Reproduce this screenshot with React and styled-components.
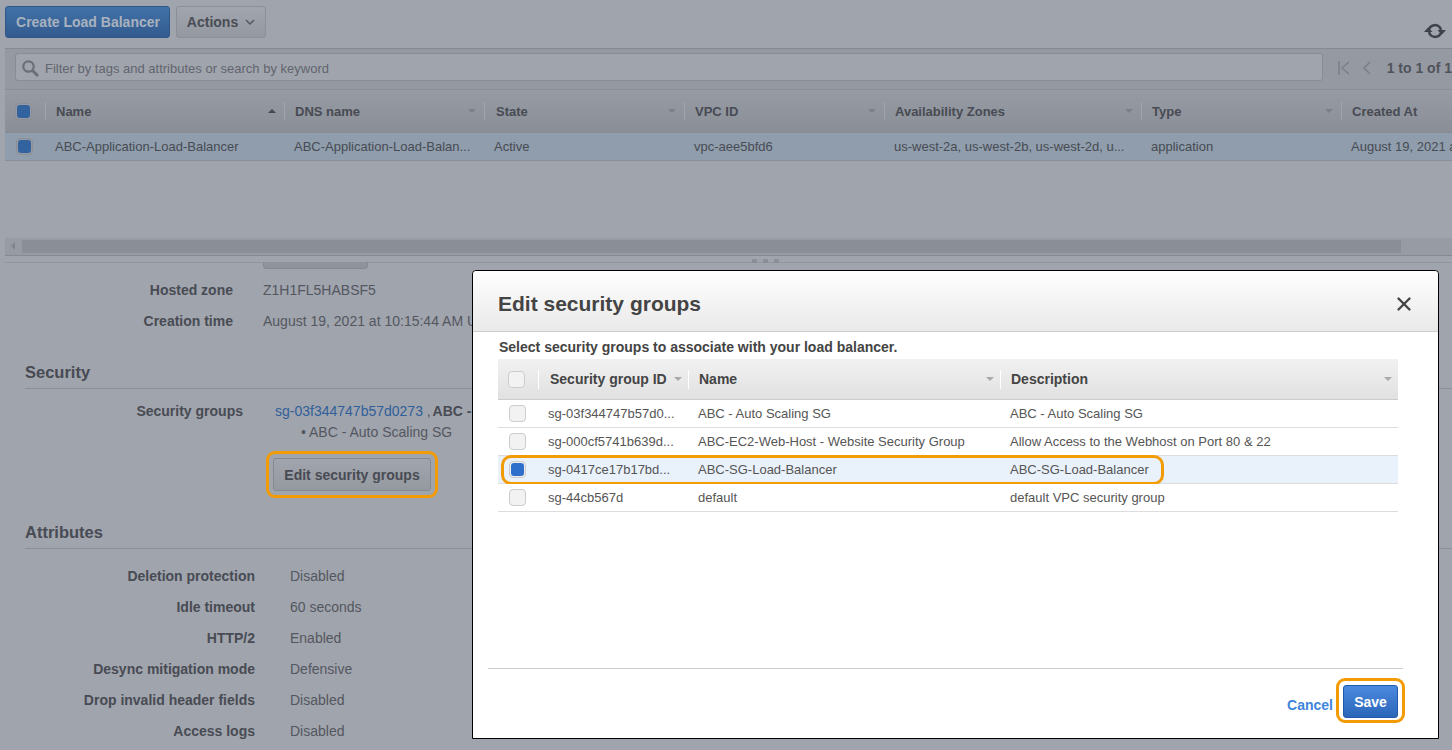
import styled, { createGlobalStyle } from "styled-components";
import { X } from "lucide-react";

const Global = createGlobalStyle`
  html, body { margin: 0; padding: 0; }
  body { font-family: "Liberation Sans", Arial, sans-serif; font-size: 13px; color: #50535b; background: #a0a4ad; }
`;

const Page = styled.div`
  position: relative;
  width: 1452px;
  height: 750px;
  overflow: hidden;
  background: #a0a4ad;
`;

const Main = styled.div`
  padding-left: 5px;
`;

const Toolbar = styled.div`
  height: 49px;
  display: flex;
  gap: 6px;
  padding-top: 6px;
  box-sizing: border-box;
  position: relative;
  border-bottom: 1px solid #858992;
`;

const PrimaryDim = styled.div`
  width: 165px;
  height: 32px;
  box-sizing: border-box;
  border: 1px solid #2f5888;
  border-radius: 3px;
  background: linear-gradient(#4172a8, #335b8f);
  color: #a9b2bf;
  font-weight: bold;
  font-size: 14px;
  padding-left: 1px;
  display: flex;
  align-items: center;
  justify-content: center;
`;

const ActionsButton = styled.div`
  width: 90px;
  height: 32px;
  box-sizing: border-box;
  border: 1px solid #8b8f98;
  border-radius: 3px;
  background: linear-gradient(#a1a5ae, #94989f);
  color: #4a4d55;
  font-weight: bold;
  font-size: 14px;
  display: flex;
  align-items: center;
  justify-content: center;
  gap: 7px;
`;

const RefreshIcon = styled.svg`
  position: absolute;
  right: 6px;
  top: 23px;
`;

const FilterBar = styled.div`
  height: 41px;
  box-sizing: border-box;
  background: #9599a2;
  padding: 4px 0 0 10px;
  display: flex;
  border-bottom: 1px solid #8a8e97;
`;

const FilterInput = styled.div`
  width: 1308px;
  height: 28px;
  box-sizing: border-box;
  background: #a0a4ad;
  border: 1px solid #888c95;
  border-radius: 3px;
  display: flex;
  align-items: center;
  padding: 2px 0 0 6px;
  gap: 5px;
  color: #62656d;
  font-size: 13px;
`;

const Pager = styled.div`
  display: flex;
  align-items: center;
  height: 30px;
  margin-left: 15px;
  gap: 16px;
  color: #50535b;
  font-weight: bold;
  white-space: nowrap;
  font-size: 14px;
`;

const PagerIcons = styled.div`
  display: flex;
  gap: 13px;
  align-items: center;
`;

const columns = "40px 239px 200px 200px 200px 257px 200px 1fr";

const TableHead = styled.div`
  display: grid;
  grid-template-columns: ${columns};
  height: 43px;
  box-sizing: border-box;
  background: linear-gradient(#979ba4, #8a8e97);
  border-bottom: 1px solid #868a93;
  align-items: center;
`;

const HeadCell = styled.div`
  height: 18px;
  display: flex;
  align-items: center;
  justify-content: space-between;
  padding: 0 8px 0 ${(p) => p.$pad || 10}px;
  border-left: 1px solid #a0a4ad;
  font-weight: bold;
  color: #484b53;
  font-size: 13px;
  white-space: nowrap;
  overflow: hidden;
`;

const Caret = styled.span`
  width: 0;
  height: 0;
  border-left: 4px solid transparent;
  border-right: 4px solid transparent;
  border-${(p) => (p.$up ? "bottom" : "top")}: 4px solid ${(p) => p.$color || "#7b7f88"};
`;

const TableRow = styled.div`
  display: grid;
  grid-template-columns: ${columns};
  height: 28px;
  box-sizing: border-box;
  align-items: center;
  background: #8f9dac;
  border-bottom: 1px solid #8a8e97;
  color: #484b53;
  font-size: 13px;
`;

const Cell = styled.div`
  padding-left: 10px;
  white-space: nowrap;
  overflow: hidden;
`;

const CheckCell = styled.div`
  display: flex;
  justify-content: center;
  padding-right: ${(p) => p.$right || 0}px;
`;

const Check = styled.span`
  width: 17px;
  height: 17px;
  box-sizing: border-box;
  display: flex;
  align-items: center;
  justify-content: center;
  border: 1px solid ${(p) => p.$border};
  border-radius: 4px;
  background: ${(p) => p.$bg};
  &::after {
    content: "";
    display: ${(p) => (p.$fill ? "block" : "none")};
    width: 13px;
    height: 13px;
    border-radius: 3px;
    background: ${(p) => p.$fill};
  }
`;

const TableGap = styled.div`
  height: 77px;
`;

const ScrollBar = styled.div`
  height: 18px;
  box-sizing: border-box;
  background: #979ba4;
  border-bottom: 1px solid #858992;
  display: flex;
  align-items: center;
  padding: 0 51px 1px 6px;
  gap: 7px;
`;

const ScrollArrow = styled.span`
  width: 0;
  height: 0;
  border-top: 4px solid transparent;
  border-bottom: 4px solid transparent;
  border-right: 4px solid #7f838c;
`;

const ScrollThumb = styled.div`
  flex: 1;
  height: 13px;
  background: #8a8e96;
`;

const Splitter = styled.div`
  height: 11px;
  border-top: 1px solid #92969f;
  margin-top: 6px;
  position: relative;
`;

const SplitDots = styled.div`
  position: absolute;
  left: 747px;
  top: -4px;
  display: flex;
  gap: 6px;
`;

const SplitDot = styled.span`
  width: 5px;
  height: 4px;
  border-radius: 1px 1px 0 0;
  background: #8a8e97;
`;

const TabStub = styled.div`
  position: absolute;
  left: 258px;
  top: -1px;
  width: 105px;
  height: 7px;
  box-sizing: border-box;
  background: #8f939c;
  border: 1px solid #868a93;
  border-top: 0;
  border-radius: 0 0 4px 4px;
`;

const Details = styled.div`
  padding-left: 20px;
`;

const InfoRow = styled.div`
  display: grid;
  grid-template-columns: ${(p) => p.$label}px 1fr;
  column-gap: ${(p) => p.$gap}px;
  height: 31px;
  align-items: center;
  white-space: nowrap;
  font-size: 14px;
`;

const Label = styled.div`
  text-align: right;
  font-weight: bold;
  color: #484b53;
`;

const Value = styled.div`
  color: #54575f;
`;

const ClippedValue = styled(Value)`
  width: 197px;
  overflow: hidden;
`;

const SectionTitle = styled.div`
  font-size: 16.5px;
  font-weight: bold;
  color: #484b53;
  height: 30px;
  line-height: 28px;
  margin-top: ${(p) => p.$top}px;
  margin-bottom: ${(p) => p.$bottom}px;
  border-bottom: 1px solid #8a8e97;
`;

const Link = styled.span`
  color: #2f5f99;
`;

const Bold = styled.b`
  color: #484b53;
  margin-left: -2px;
`;

const GroupNote = styled.div`
  font-size: 14px;
  color: #54575f;
  margin: -2px 0 0 276px;
  line-height: 17px;
`;

const Ring = styled.div`
  display: inline-flex;
  border: 3px solid #f29b05;
  border-radius: 9px;
  padding: 4px;
`;

const SaveRing = styled(Ring)`
  padding-bottom: 2px;
  margin-right: -2px;
  background: #fff;
`;

const RingWrap = styled.div`
  margin: 10px 0 0 241px;
  height: 47px;
`;

const EditButton = styled.div`
  width: 158px;
  height: 33px;
  box-sizing: border-box;
  border: 1px solid #858992;
  border-radius: 3px;
  background: linear-gradient(#a1a5ae, #94989f);
  color: #484b53;
  font-weight: bold;
  font-size: 14px;
  display: flex;
  align-items: center;
  justify-content: center;
`;

const Modal = styled.div`
  position: absolute;
  left: 472px;
  top: 270px;
  width: 967px;
  height: 469px;
  box-sizing: border-box;
  background: #fff;
  border: 1px solid #000;
  border-radius: 4px 4px 0 0;
  display: flex;
  flex-direction: column;
  color: #555;
`;

const ModalHeader = styled.div`
  height: 61px;
  flex: none;
  box-sizing: border-box;
  background: linear-gradient(#fff, #e9e9e9);
  border-bottom: 1px solid #ccc;
  border-radius: 4px 4px 0 0;
  display: flex;
  align-items: center;
  justify-content: space-between;
  padding: 5px 23px 0 25px;
`;

const ModalTitle = styled.div`
  font-size: 21px;
  font-weight: bold;
  color: #444;
`;

const ModalBody = styled.div`
  padding: 5px 40px 0 25px;
  flex: 1;
`;

const Hint = styled.div`
  font-weight: bold;
  font-size: 14px;
  color: #444;
  line-height: 20px;
  margin-left: 1px;
  margin-bottom: 2px;
  white-space: nowrap;
`;

const sgColumns = "40px 150px 312px 1fr";

const SgHead = styled.div`
  display: grid;
  grid-template-columns: ${sgColumns};
  height: 41px;
  box-sizing: border-box;
  align-items: center;
  background: linear-gradient(#f1f1f1, #e1e1e1);
  border-bottom: 1px solid #ccc;
`;

const SgHeadCell = styled(HeadCell)`
  color: #444;
  border-left-color: #fff;
  padding-right: 6px;
  font-size: 14px;
  height: 19px;
`;

const SgRow = styled.div`
  position: relative;
  display: grid;
  grid-template-columns: ${sgColumns};
  height: 28px;
  box-sizing: border-box;
  align-items: center;
  background: ${(p) => (p.$selected ? "#e9f1fb" : "#fff")};
  border-bottom: 1px solid #ddd;
  font-size: 13px;
  color: #555;
`;

const RowRing = styled.span`
  position: absolute;
  left: 3px;
  top: -1px;
  width: 663px;
  height: 30px;
  box-sizing: border-box;
  border: 3px solid #f29b05;
  border-radius: 10px;
`;

const ModalFooter = styled.div`
  flex: none;
  height: 70px;
  margin: 0 35px 0 15px;
  border-top: 1px solid #ccc;
  display: flex;
  justify-content: flex-end;
  align-items: flex-start;
  padding-top: 9px;
  box-sizing: border-box;
  gap: 3px;
`;

const CancelLink = styled.div`
  color: #3d85db;
  font-weight: bold;
  font-size: 14px;
  margin-top: 19px;
`;

const SaveButton = styled.div`
  width: 55px;
  height: 33px;
  box-sizing: border-box;
  border: 1px solid #1f5ba8;
  border-radius: 3px;
  background: linear-gradient(#4a8ae0, #2b66b8);
  color: #fff;
  font-weight: bold;
  font-size: 14px;
  display: flex;
  align-items: center;
  justify-content: center;
`;

const lbColumns = [
  ["DNS name", "ABC-Application-Load-Balan..."],
  ["State", "Active"],
  ["VPC ID", "vpc-aee5bfd6"],
  ["Availability Zones", "us-west-2a, us-west-2b, us-west-2d, u..."],
  ["Type", "application"],
];

const attributes = [
  ["Deletion protection", "Disabled"],
  ["Idle timeout", "60 seconds"],
  ["HTTP/2", "Enabled"],
  ["Desync mitigation mode", "Defensive"],
  ["Drop invalid header fields", "Disabled"],
  ["Access logs", "Disabled"],
];

const groups = [
  ["sg-03f344747b57d0...", "ABC - Auto Scaling SG", "ABC - Auto Scaling SG"],
  ["sg-000cf5741b639d...", "ABC-EC2-Web-Host - Website Security Group", "Allow Access to the Webhost on Port 80 & 22"],
  ["sg-0417ce17b17bd...", "ABC-SG-Load-Balancer", "ABC-SG-Load-Balancer", true],
  ["sg-44cb567d", "default", "default VPC security group"],
];

const DimCheck = () => <Check $border="#8b8f98" $bg="#9599a2" $fill="#33639f" />;

const App = () => {
  return (
    <Page>
      <Global />
      <Main>
        <Toolbar>
          <PrimaryDim>Create Load Balancer</PrimaryDim>
          <ActionsButton>
            Actions
            <svg width="10" height="7" viewBox="0 0 10 7" fill="none" stroke="#53565e" strokeWidth="1.5">
              <path d="M1 1l4 4 4-4" />
            </svg>
          </ActionsButton>
          <RefreshIcon width="22" height="16" viewBox="0 0 22 16" fill="none">
            <path d="M5 6A6.5 6.5 0 0 1 16 4.5L17 7" stroke="#3f4249" strokeWidth="2.5" />
            <path d="M13.5 7H22l-4.2 4.7z" fill="#3f4249" />
            <path d="M17 10A6.5 6.5 0 0 1 6 11.5L5 9" stroke="#3f4249" strokeWidth="2.5" />
            <path d="M8.5 9H0l4.2-4.7z" fill="#3f4249" />
          </RefreshIcon>
        </Toolbar>
        <FilterBar>
          <FilterInput>
            <svg width="18" height="18" viewBox="0 0 18 18" fill="none" stroke="#6c6f77">
              <circle cx="6.5" cy="7.5" r="5.2" strokeWidth="2.2" />
              <path d="M10.5 11.5L16 17" strokeWidth="3" />
            </svg>
            Filter by tags and attributes or search by keyword
          </FilterInput>
          <Pager>
            <PagerIcons>
              <svg width="12" height="14" viewBox="0 0 12 14" fill="none" stroke="#7c8089" strokeWidth="1.6">
                <path d="M1 0v14M11 1L4 7l7 6" />
              </svg>
              <svg width="8" height="14" viewBox="0 0 8 14" fill="none" stroke="#7c8089" strokeWidth="1.6">
                <path d="M7 1L1 7l6 6" />
              </svg>
            </PagerIcons>
            1 to 1 of 1
          </Pager>
        </FilterBar>
        <TableHead>
          <CheckCell $right={4}>
            <DimCheck />
          </CheckCell>
          <HeadCell>
            Name <Caret $up $color="#44474f" />
          </HeadCell>
          {lbColumns.map(([title]) => (
            <HeadCell key={title} $pad={title === "State" ? 11 : 10}>
              {title} <Caret />
            </HeadCell>
          ))}
          <HeadCell>Created At</HeadCell>
        </TableHead>
        <TableRow>
          <CheckCell $right={1}>
            <DimCheck />
          </CheckCell>
          <Cell>ABC-Application-Load-Balancer</Cell>
          {lbColumns.map(([title, value]) => (
            <Cell key={title}>{value}</Cell>
          ))}
          <Cell>August 19, 2021 at 10:15:44 AM</Cell>
        </TableRow>
        <TableGap />
        <ScrollBar>
          <ScrollArrow />
          <ScrollThumb />
        </ScrollBar>
        <Splitter>
          <TabStub />
          <SplitDots>
            <SplitDot />
            <SplitDot />
            <SplitDot />
          </SplitDots>
        </Splitter>
        <Details>
          <InfoRow $label={208} $gap={30}>
            <Label>Hosted zone</Label>
            <Value>Z1H1FL5HABSF5</Value>
          </InfoRow>
          <InfoRow $label={208} $gap={30}>
            <Label>Creation time</Label>
            <Value>August 19, 2021 at 10:15:44 AM UTC</Value>
          </InfoRow>
          <SectionTitle $top={22} $bottom={6}>Security</SectionTitle>
          <InfoRow $label={218} $gap={32}>
            <Label>Security groups</Label>
            <ClippedValue>
              <Link>sg-03f344747b57d0273</Link> , <Bold>ABC - Auto Scaling SG</Bold>
            </ClippedValue>
          </InfoRow>
          <GroupNote>• ABC - Auto Scaling SG</GroupNote>
          <RingWrap>
            <Ring>
              <EditButton>Edit security groups</EditButton>
            </Ring>
          </RingWrap>
          <SectionTitle $top={20} $bottom={11}>Attributes</SectionTitle>
          {attributes.map(([label, value]) => (
            <InfoRow key={label} $label={230} $gap={35}>
              <Label>{label}</Label>
              <Value>{value}</Value>
            </InfoRow>
          ))}
        </Details>
      </Main>

      <Modal>
        <ModalHeader>
          <ModalTitle>Edit security groups</ModalTitle>
          <X size={22} color="#444" strokeWidth={2.6} />
        </ModalHeader>
        <ModalBody>
          <Hint>Select security groups to associate with your load balancer.</Hint>
          <SgHead>
            <CheckCell $right={3}>
              <Check $border="#ccc" $bg="#f2f2f2" />
            </CheckCell>
            <SgHeadCell $pad={11}>
              Security group ID <Caret $color="#aaa" />
            </SgHeadCell>
            <SgHeadCell>
              Name <Caret $color="#aaa" />
            </SgHeadCell>
            <SgHeadCell>
              Description <Caret $color="#aaa" />
            </SgHeadCell>
          </SgHead>
          {groups.map(([id, name, description, selected]) => (
            <SgRow key={id} $selected={selected}>
              <CheckCell $right={1}>
                {selected ? <Check $border="#ccc" $bg="#eee" $fill="#2e6fcb" /> : <Check $border="#ccc" $bg="#f2f2f2" />}
              </CheckCell>
              <Cell>{id}</Cell>
              <Cell>{name}</Cell>
              <Cell>{description}</Cell>
              {selected && <RowRing />}
            </SgRow>
          ))}
        </ModalBody>
        <ModalFooter>
          <CancelLink>Cancel</CancelLink>
          <SaveRing>
            <SaveButton>Save</SaveButton>
          </SaveRing>
        </ModalFooter>
      </Modal>
    </Page>
  );
};

export default App;
